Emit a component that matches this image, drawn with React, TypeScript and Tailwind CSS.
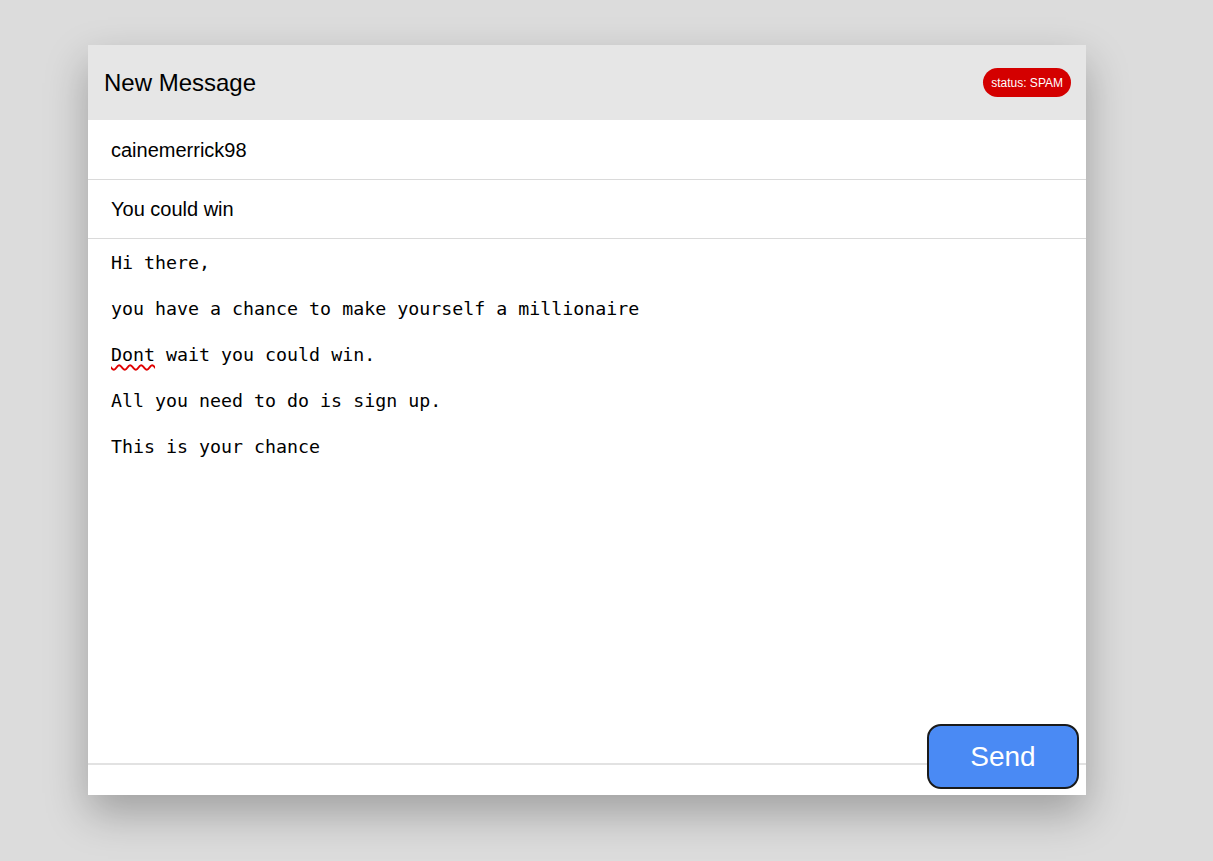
export default function App() {
  const lines = [
    "Hi there,",
    "",
    "you have a chance to make yourself a millionaire",
    "",
    "DONT",
    "",
    "All you need to do is sign up.",
    "",
    "This is your chance",
  ];

  return (
    <div className="min-h-[861px] w-full bg-[#dcdcdc] pl-[88px] pt-[45px] font-['Liberation_Sans',Arial,sans-serif]">
      <div className="relative flex h-[750px] w-[998px] flex-col bg-white shadow-[0_18px_40px_rgba(0,0,0,0.28)]">
        <header className="flex h-[75px] items-center justify-between bg-[#e6e6e6] pl-4 pr-[15px]">
          <h1 className="text-[24px] text-black">New Message</h1>
          <span className="flex h-[29px] items-center rounded-full bg-[#d40000] px-[8px] text-[12px] leading-none text-white">
            status: SPAM
          </span>
        </header>

        <div className="flex h-[60px] items-center border-b border-[#dadada] px-[23px] pt-px text-[20px] text-black">
          cainemerrick98
        </div>
        <div className="flex h-[59px] items-center border-b border-[#dadada] px-[23px] text-[20px] text-black">
          You could win
        </div>

        <div className="flex-1 border-b-2 border-[#e2e2e2] px-[23px] pt-[12px] font-['DejaVu_Sans_Mono',monospace] text-[18.3px] leading-[23px] text-black">
          {lines.map((line, i) =>
            line === "DONT" ? (
              <div key={i}>
                <span className="underline decoration-[#e00000] decoration-wavy decoration-[1.5px] underline-offset-[3px]">Dont</span> wait you could win.
              </div>
            ) : (
              <div key={i} className="h-[23px] whitespace-pre">
                {line}
              </div>
            ),
          )}
        </div>
        <div className="h-[30px]" />

        <button className="absolute bottom-[6px] right-[7px] h-[65px] w-[152px] rounded-[14px] border-2 border-[#1a1a1a] bg-[#4a8af4] text-[28px] text-white">
          Send
        </button>
      </div>
    </div>
  );
}
